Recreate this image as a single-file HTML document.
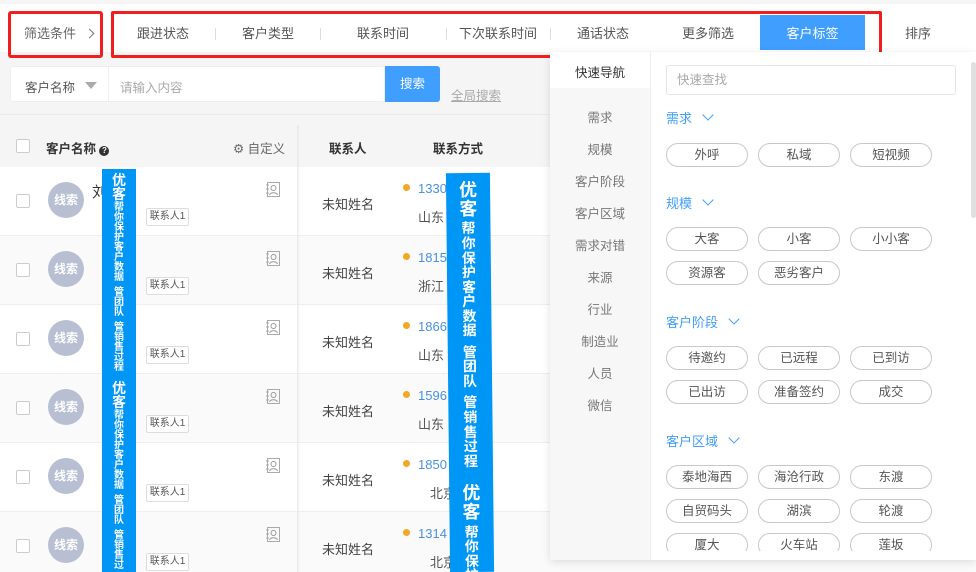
<!DOCTYPE html>
<html><head><meta charset="utf-8"><style>
*{margin:0;padding:0;box-sizing:border-box}
html,body{width:976px;height:572px;overflow:hidden}
body{background:#f5f5f5;font-family:"Liberation Sans","Noto Sans CJK SC",sans-serif;font-size:13px;color:#333;position:relative}
.a{position:absolute}
.tab{position:absolute;top:18px;height:32px;line-height:32px;font-size:13px;color:#555;text-align:center}
.sep{position:absolute;top:28px;width:1px;height:12px;background:#ddd}
.row{position:absolute;left:0;width:976px;height:69px;border-bottom:1px solid #eee}
.cb{position:absolute;left:16px;width:14px;height:14px;border:1px solid #ccc;border-radius:2px;background:#fff}
.av{position:absolute;left:48px;width:36px;height:36px;border-radius:50%;background:#b9bfd3;color:#fff;font-size:12px;font-weight:bold;text-align:center;line-height:36px}
.tg{position:absolute;left:146px;width:43px;height:18px;border:1px solid #ddd;border-radius:2px;font-size:10px;line-height:16px;text-align:center;color:#555;background:#fff}
.ic{position:absolute;left:266px;width:14px;height:15px}
.nm{position:absolute;left:322px;font-size:13px;color:#444}
.dot{position:absolute;left:403px;width:7px;height:7px;border-radius:50%;background:#f5a623}
.ph{position:absolute;left:418px;color:#4a90e2;font-size:13px}
.ad{position:absolute;left:418px;color:#555;font-size:13px}
.ban{position:absolute;background:#0096f5;color:#fff;font-weight:bold;display:flex;flex-direction:column;align-items:center;overflow:hidden}
.ban span{display:block;line-height:1}
.b2 span{line-height:1.04}
.nav{position:absolute;left:550px;width:100px;text-align:center;font-size:12.5px;color:#777}
.sh{position:absolute;left:666px;color:#409eff;font-size:13px}
.sh i{display:inline-block;width:8px;height:8px;border-right:1.5px solid #409eff;border-bottom:1.5px solid #409eff;transform:rotate(45deg);margin-left:12px;position:relative;top:-4px}
.p{position:absolute;width:82px;height:24px;border:1px solid #c8c8c8;border-radius:12px;text-align:center;line-height:22px;font-size:12.5px;color:#555;background:#fff}
</style></head><body>
<svg width="0" height="0" style="position:absolute"><defs><symbol id="ci" viewBox="0 0 14 15"><rect x="1.5" y="0.5" width="12" height="14" fill="none" stroke="#aaa"/><path d="M0 3h3M0 7h3M0 11h3" stroke="#aaa"/><circle cx="7.5" cy="6" r="2.5" fill="none" stroke="#999"/><path d="M3.5 13c1-3 7-3 8 0" fill="none" stroke="#999"/></symbol></defs></svg>
<div class="a" style="left:0;top:4px;width:976px;height:48px;background:#fff"></div>
<div class="a" style="left:8px;top:11px;width:95px;height:47px;border:3px solid #f21e1e;border-radius:3px"></div>
<div class="tab" style="left:24px;color:#666">筛选条件</div>
<div class="a" style="left:86px;top:30px;width:7px;height:7px;border-right:1px solid #777;border-top:1px solid #777;transform:rotate(45deg)"></div>
<div class="a" style="left:760px;top:15px;width:105px;height:35px;background:#409eff"></div>
<div class="a" style="left:111px;top:11px;width:771px;height:47px;border:3px solid #f21e1e;border-radius:2px"></div>
<div class="tab" style="left:123px;width:80px">跟进状态</div>
<div class="sep" style="left:215px"></div>
<div class="tab" style="left:228px;width:80px">客户类型</div>
<div class="sep" style="left:320px"></div>
<div class="tab" style="left:343px;width:80px">联系时间</div>
<div class="sep" style="left:446px"></div>
<div class="tab" style="left:453px;width:90px">下次联系时间</div>
<div class="sep" style="left:550px"></div>
<div class="tab" style="left:563px;width:80px">通话状态</div>
<div class="tab" style="left:668px;width:80px">更多筛选</div>
<div class="tab" style="left:760px;width:105px;color:#fff">客户标签</div>
<div class="tab" style="left:893px;width:50px">排序</div>

<div class="a" style="left:10px;top:66px;width:375px;height:36px;background:#fff;border:1px solid #eee;border-radius:3px"></div>
<div class="a" style="left:108px;top:66px;width:1px;height:36px;background:#eee"></div>
<div class="a" style="left:25px;top:77px;font-size:12.5px;color:#555">客户名称</div>
<div class="a" style="left:85px;top:82px;border-left:6px solid transparent;border-right:6px solid transparent;border-top:7px solid #aaa"></div>
<div class="a" style="left:120px;top:77px;font-size:12.5px;color:#aaa">请输入内容</div>
<div class="a" style="left:385px;top:66px;width:55px;height:36px;background:#409eff;border-radius:0 3px 3px 0;color:#fff;text-align:center;line-height:36px;font-size:12.5px">搜索</div>
<div class="a" style="left:451px;top:85px;font-size:12.5px;color:#aaa;text-decoration:underline">全局搜索</div>

<div class="a" style="left:0;top:114px;width:976px;height:1px;background:#eaeaea"></div>
<div class="a" style="left:0;top:125px;width:976px;height:42px;background:#f5f5f5"></div>
<div class="cb" style="top:139px"></div>
<div class="a" style="left:46px;top:138px;font-weight:bold;font-size:12.5px;color:#333">客户名称 <span style="display:inline-block;width:10px;height:10px;border-radius:50%;background:#333;color:#fff;font-size:8px;text-align:center;line-height:10px">?</span></div>
<div class="a" style="left:233px;top:138px;font-size:12.5px;color:#666">⚙ 自定义</div>
<div class="a" style="left:329px;top:138px;font-weight:bold;font-size:12.5px">联系人</div>
<div class="a" style="left:433px;top:138px;font-weight:bold;font-size:12.5px">联系方式</div>

<div class="row" style="top:167px;background:#fff"></div>
<div class="row" style="top:236px;background:#fafafa"></div>
<div class="row" style="top:305px;background:#fff"></div>
<div class="row" style="top:374px;background:#fafafa"></div>
<div class="row" style="top:443px;background:#fff"></div>
<div class="row" style="top:512px;background:#fafafa"></div>
<div class="a" style="left:297px;top:125px;width:3px;height:447px;background:linear-gradient(90deg,#e8e8e8,rgba(0,0,0,0))"></div>

<div class="cb" style="top:194px"></div><div class="av" style="top:182px">线索</div><div class="a" style="left:92px;top:181px;font-size:15px">刘</div><div class="tg" style="top:208px">联系人1</div><svg class="ic" style="top:182px"><use href="#ci"/></svg><div class="nm" style="top:194px">未知姓名</div><div class="dot" style="top:184px"></div><div class="ph" style="top:181px">1330</div><div class="ad" style="top:207px">山东</div>
<div class="cb" style="top:263px"></div><div class="av" style="top:251px">线索</div><div class="tg" style="top:277px">联系人1</div><svg class="ic" style="top:251px"><use href="#ci"/></svg><div class="nm" style="top:263px">未知姓名</div><div class="dot" style="top:253px"></div><div class="ph" style="top:250px">1815</div><div class="ad" style="top:276px">浙江</div>
<div class="cb" style="top:332px"></div><div class="av" style="top:320px">线索</div><div class="tg" style="top:346px">联系人1</div><svg class="ic" style="top:320px"><use href="#ci"/></svg><div class="nm" style="top:332px">未知姓名</div><div class="dot" style="top:322px"></div><div class="ph" style="top:319px">1866</div><div class="ad" style="top:345px">山东</div>
<div class="cb" style="top:401px"></div><div class="av" style="top:389px">线索</div><div class="tg" style="top:415px">联系人1</div><svg class="ic" style="top:389px"><use href="#ci"/></svg><div class="nm" style="top:401px">未知姓名</div><div class="dot" style="top:391px"></div><div class="ph" style="top:388px">1596</div><div class="ad" style="top:414px">山东</div>
<div class="cb" style="top:470px"></div><div class="av" style="top:458px">线索</div><div class="tg" style="top:484px">联系人1</div><svg class="ic" style="top:458px"><use href="#ci"/></svg><div class="nm" style="top:470px">未知姓名</div><div class="dot" style="top:460px"></div><div class="ph" style="top:457px">1850</div><div class="ad" style="top:483px;left:430px">北京</div>
<div class="cb" style="top:539px"></div><div class="av" style="top:527px">线索</div><div class="tg" style="top:553px">联系人1</div><svg class="ic" style="top:527px"><use href="#ci"/></svg><div class="nm" style="top:539px">未知姓名</div><div class="dot" style="top:529px"></div><div class="ph" style="top:526px">1314</div><div class="ad" style="top:552px;left:430px">北京</div>

<div class="ban" style="left:102px;top:169px;width:34px;height:403px;padding-top:4px">
<span style="font-size:14px">优</span><span style="font-size:14px;margin-bottom:2px">客</span>
<span style="font-size:10px">帮</span><span style="font-size:10px">你</span><span style="font-size:10px">保</span><span style="font-size:10px">护</span><span style="font-size:10px">客</span><span style="font-size:10px">户</span><span style="font-size:10px">数</span><span style="font-size:10px;margin-bottom:5px">据</span>
<span style="font-size:10px">管</span><span style="font-size:10px">团</span><span style="font-size:10px;margin-bottom:5px">队</span>
<span style="font-size:10px">管</span><span style="font-size:10px">销</span><span style="font-size:10px">售</span><span style="font-size:10px">过</span><span style="font-size:10px;margin-bottom:8px">程</span>
<span style="font-size:14px">优</span><span style="font-size:14px;margin-bottom:2px">客</span>
<span style="font-size:10px">帮</span><span style="font-size:10px">你</span><span style="font-size:10px">保</span><span style="font-size:10px">护</span><span style="font-size:10px">客</span><span style="font-size:10px">户</span><span style="font-size:10px">数</span><span style="font-size:10px;margin-bottom:5px">据</span>
<span style="font-size:10px">管</span><span style="font-size:10px">团</span><span style="font-size:10px;margin-bottom:5px">队</span>
<span style="font-size:10px">管</span><span style="font-size:10px">销</span><span style="font-size:10px">售</span><span style="font-size:10px">过</span>
</div>
<div class="ban b2" style="left:448px;top:173px;width:44px;height:399px;padding-top:8px;transform:rotate(-0.6deg)">
<span style="font-size:18px">优</span><span style="font-size:18px;margin-bottom:3px">客</span>
<span style="font-size:14px">帮</span><span style="font-size:14px">你</span><span style="font-size:14px">保</span><span style="font-size:14px">护</span><span style="font-size:14px">客</span><span style="font-size:14px">户</span><span style="font-size:14px">数</span><span style="font-size:14px;margin-bottom:7px">据</span>
<span style="font-size:14px">管</span><span style="font-size:14px">团</span><span style="font-size:14px;margin-bottom:7px">队</span>
<span style="font-size:14px">管</span><span style="font-size:14px">销</span><span style="font-size:14px">售</span><span style="font-size:14px">过</span><span style="font-size:14px;margin-bottom:16px">程</span>
<span style="font-size:18px">优</span><span style="font-size:18px;margin-bottom:3px">客</span>
<span style="font-size:14px">帮</span><span style="font-size:14px">你</span><span style="font-size:14px">保</span><span style="font-size:14px">护</span>
</div>

<div class="a" style="left:550px;top:52px;width:426px;height:508px;background:#fff;box-shadow:0 2px 8px rgba(0,0,0,.12)"></div>
<div class="a" style="left:550px;top:88px;width:100px;height:472px;background:#f7f7f7"></div>
<div class="a" style="left:650px;top:52px;width:1px;height:508px;background:#eee"></div>
<div class="nav" style="top:62px;color:#333">快速导航</div>
<div class="nav" style="top:107px">需求</div>
<div class="nav" style="top:139px">规模</div>
<div class="nav" style="top:171px">客户阶段</div>
<div class="nav" style="top:203px">客户区域</div>
<div class="nav" style="top:235px">需求对错</div>
<div class="nav" style="top:267px">来源</div>
<div class="nav" style="top:299px">行业</div>
<div class="nav" style="top:331px">制造业</div>
<div class="nav" style="top:363px">人员</div>
<div class="nav" style="top:395px">微信</div>
<div class="a" style="left:666px;top:65px;width:290px;height:30px;border:1px solid #e6e6e6;border-radius:3px;padding-left:10px;line-height:28px;font-size:12.5px;color:#aaa">快速查找</div>
<div class="a" style="left:971px;top:62px;width:5px;height:156px;background:#e0e0e0;border-radius:3px"></div>
<div style="position:absolute;left:650px;top:52px;width:320px;height:499px;overflow:hidden">
<div class="sh" style="left:16px;top:56px">需求<i></i></div>
<div class="p" style="left:16px;top:91px">外呼</div><div class="p" style="left:108px;top:91px">私域</div><div class="p" style="left:200px;top:91px">短视频</div>
<div class="sh" style="left:16px;top:141px">规模<i></i></div>
<div class="p" style="left:16px;top:175px">大客</div><div class="p" style="left:108px;top:175px">小客</div><div class="p" style="left:200px;top:175px">小小客</div>
<div class="p" style="left:16px;top:209px">资源客</div><div class="p" style="left:108px;top:209px">恶劣客户</div>
<div class="sh" style="left:16px;top:260px">客户阶段<i></i></div>
<div class="p" style="left:16px;top:294px">待邀约</div><div class="p" style="left:108px;top:294px">已远程</div><div class="p" style="left:200px;top:294px">已到访</div>
<div class="p" style="left:16px;top:328px">已出访</div><div class="p" style="left:108px;top:328px">准备签约</div><div class="p" style="left:200px;top:328px">成交</div>
<div class="sh" style="left:16px;top:379px">客户区域<i></i></div>
<div class="p" style="left:16px;top:413px">泰地海西</div><div class="p" style="left:108px;top:413px">海沧行政</div><div class="p" style="left:200px;top:413px">东渡</div>
<div class="p" style="left:16px;top:447px">自贸码头</div><div class="p" style="left:108px;top:447px">湖滨</div><div class="p" style="left:200px;top:447px">轮渡</div>
<div class="p" style="left:16px;top:481px">厦大</div><div class="p" style="left:108px;top:481px">火车站</div><div class="p" style="left:200px;top:481px">莲坂</div>
</div>
</body></html>
